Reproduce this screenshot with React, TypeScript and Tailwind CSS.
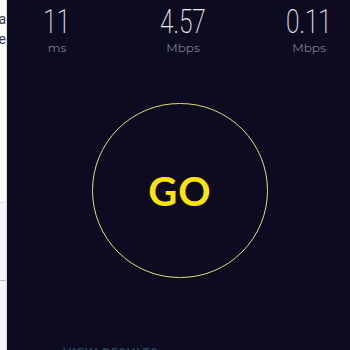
export default function App() {
  const stats = [
    { value: "11", unit: "ms" },
    { value: "4.57", unit: "Mbps" },
    { value: "0.11", unit: "Mbps" },
  ]

  return (
    <div className="flex h-[350px] w-[350px] overflow-hidden font-['Roboto',sans-serif]">
      {/* Left sliver of the page behind */}
      <div className="flex w-[7px] shrink-0 flex-col overflow-hidden border-r border-[#d9dae3] bg-white">
        <div className="flex h-[202px] flex-col items-end pt-[9px] text-[14px] leading-[20px] text-[#3a3a44]">
          <span className="whitespace-nowrap">a</span>
          <span className="whitespace-nowrap">e</span>
        </div>
        <div className="flex-1 border-t border-[#e3e4ec] bg-[#f6f7fb] pt-[77px]">
          <div className="h-px w-full bg-[#b9b8d8]" />
        </div>
      </div>

      {/* Speed test panel */}
      <div className="flex flex-1 flex-col bg-[#0c0b1f]">
        <div className="flex gap-[46px] pl-[10px] pt-[5px]">
          {stats.map((s) => (
            <div key={s.value + s.unit} className="flex w-[80px] flex-col items-center">
              <span className="scale-x-[0.72] text-[34px] font-extralight leading-[32px] text-[#ececf2]">
                {s.value}
              </span>
              <span className="mt-[4px] font-['Montserrat','Lato',sans-serif] text-[12px] leading-[14px] text-[#7d7d8e]">
                {s.unit}
              </span>
            </div>
          ))}
        </div>

        <div className="flex justify-center pl-[3px] pt-[48px]">
          <button className="flex h-[175px] w-[176px] items-center justify-center rounded-full border-[1.5px] border-[#e2dc7c]">
            <span className="font-['Lato',sans-serif] text-[40px] font-bold leading-none tracking-[1px] text-[#ffe400]">
              GO
            </span>
          </button>
        </div>

        <div className="pl-[56px] pt-[61px]">
          <span className="font-['Lato',sans-serif] text-[12px] font-bold tracking-[1px] text-[#1b4f60]">
            VIEW RESULTS
          </span>
        </div>
      </div>
    </div>
  )
}
